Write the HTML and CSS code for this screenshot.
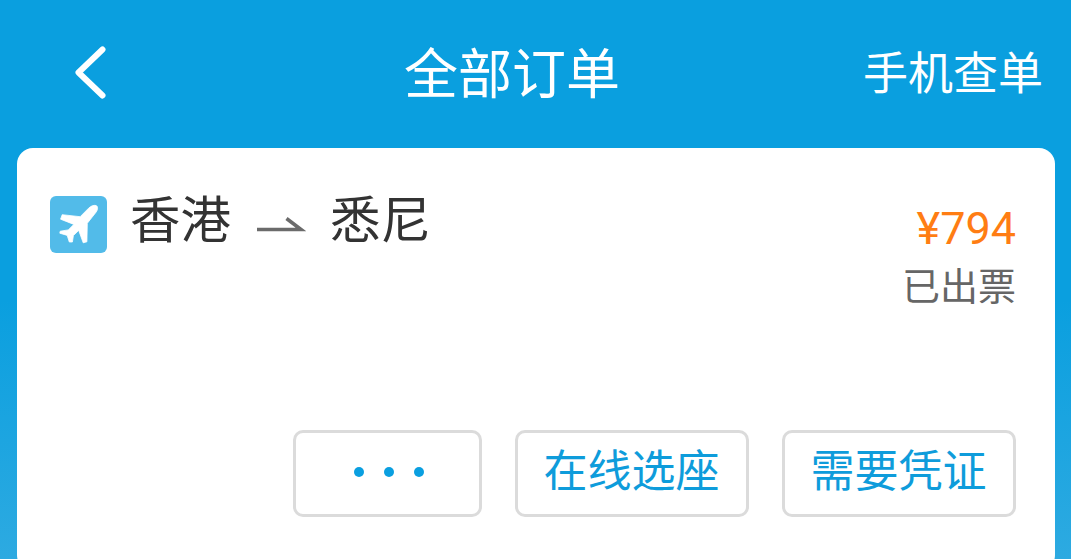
FILE: index.html
```html
<!DOCTYPE html>
<html lang="zh-CN">
  <head>
    <meta charset="UTF-8" />
    <meta name="viewport" content="width=device-width, initial-scale=1.0" />
    <title>全部订单</title>
    <link rel="stylesheet" href="styles.css">
  </head>
  <body>
    <header class="navbar">
      <a class="back" aria-label="返回">
        <svg width="34" height="56" viewBox="0 0 34 56">
          <path d="M29.5 6.5 5.5 29.5 29.5 52.5" />
        </svg>
      </a>
      <h1 class="title">全部订单</h1>
      <a class="lookup">手机查单</a>
    </header>
    <main class="card">
      <div class="order">
        <svg class="plane" width="57" height="57" viewBox="0 0 57 57">
          <path d="M46 9.5C48.3 10.3 47.8 13.8 46.2 16L37.3 27.3L36.9 45.8L33.2 46.8L28.7 34.4L23.4 39.6L22.4 46L19.3 46L17.2 39.4L9.8 37.2L10.2 35.2L18.3 33.9L23.8 28.4L10.6 23.2L12.2 18.7L30.2 20.7L38.6 12.2C41 10 43.5 8.9 46 9.5Z" />
        </svg>
        <h2 class="route">
          <span>香港</span>
          <svg class="arrow" width="50" height="20" viewBox="0 0 50 20">
            <path d="M1 14.5H45L30.5 3.5" />
          </svg>
          <span>悉尼</span>
        </h2>
        <div class="summary">
          <p class="price">¥794</p>
          <p class="status">已出票</p>
        </div>
      </div>
      <div class="actions">
        <button class="btn btn-more" aria-label="更多">
          <i class="dot"></i>
          <i class="dot"></i>
          <i class="dot"></i>
        </button>
        <button class="btn">在线选座</button>
        <button class="btn">需要凭证</button>
      </div>
    </main>
  </body>
</html>
```

FILE: styles.css
```css
* {
  box-sizing: border-box;
  margin: 0;
  padding: 0;
}

body {
  height: 559px;
  overflow: hidden;
  padding: 0 16px 0 17px;
  font-family: "Noto Sans CJK SC", sans-serif;
  line-height: 1;
  background: linear-gradient(#0a9fdf 300px, #2daae1 559px);
}

h1,
h2 {
  font-weight: normal;
}

/* top bar */
.navbar {
  display: flex;
  align-items: center;
  height: 148px;
  padding: 0 12px 7px 56px;
  color: #fff;
}

.back svg {
  display: block;
  fill: none;
  stroke: #fff;
  stroke-width: 6;
  stroke-linecap: round;
  stroke-linejoin: round;
}

.title {
  margin-left: 297px;
  font-size: 54px;
}

.lookup {
  margin-left: auto;
  font-size: 45px;
}

/* order card */
.card {
  display: flex;
  flex-direction: column;
  justify-content: space-between;
  height: 423px;
  padding: 43px 39px 54px 33px;
  background: #fff;
  border-radius: 16px;
}

.order {
  display: flex;
  align-items: flex-start;
}

.plane {
  flex: none;
  margin-top: 5px;
  background: #52bbe9;
  border-radius: 6px;
  fill: #fff;
  stroke: #fff;
  stroke-width: 0.8;
  stroke-linejoin: round;
}

.route {
  display: flex;
  margin-left: 23px;
  font-size: 50.5px;
  color: #333;
}

.arrow {
  margin: 24px 24px 0 25px;
  fill: none;
  stroke: #6b6b6b;
  stroke-width: 3.6;
}

.summary {
  margin-left: auto;
  padding-top: 15px;
  text-align: right;
}

.price {
  font-family: Roboto, sans-serif;
  font-size: 45px;
  line-height: 46px;
  color: #ff7d13;
}

.status {
  margin-top: 13px;
  font-size: 38px;
  color: #666;
}

/* buttons */
.actions {
  display: flex;
  justify-content: flex-end;
  gap: 33px;
}

.btn {
  display: flex;
  align-items: center;
  justify-content: center;
  width: 234px;
  height: 87px;
  padding: 0 1px 12px 0;
  font-family: inherit;
  font-size: 44px;
  line-height: 1;
  color: #0e9cdb;
  background: #fff;
  border: 3px solid #dbdbdb;
  border-radius: 10px;
}

.btn-more {
  width: 189px;
  gap: 20px;
  padding: 0 0 3px 3px;
}

.dot {
  width: 10px;
  height: 10px;
  border-radius: 50%;
  background: #0a9fe0;
}
```
